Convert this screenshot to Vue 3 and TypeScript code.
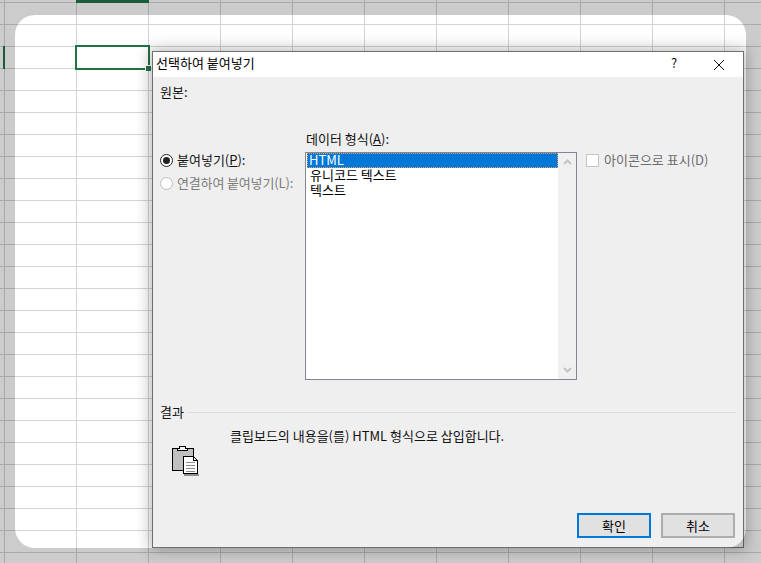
<script setup lang="ts">
const formats: string[] = ['HTML', '유니코드 텍스트', '텍스트']
</script>

<template>
  <div class="sheet">
    <div class="col-mark"></div>
    <div class="row-mark"></div>
    <div class="cell"><span class="handle"></span></div>

    <section class="dialog">
      <header class="titlebar">
        <span class="title">선택하여 붙여넣기</span>
        <span class="help">?</span>
        <svg class="close" width="12" height="12" viewBox="0 0 12 12">
          <path d="M1 1L11 11M11 1L1 11" stroke="#111" stroke-width="1" fill="none" />
        </svg>
      </header>

      <div class="body">
        <div class="source">원본:</div>

        <div class="main">
          <div class="options">
            <label class="radio-row">
              <span class="radio on"></span>
              <span>붙여넣기(<u>P</u>):</span>
            </label>
            <label class="radio-row off">
              <span class="radio"></span>
              <span class="tight">연결하여 붙여넣기(L):</span>
            </label>
          </div>

          <div class="format">
            <div class="format-label">데이터 형식(<u>A</u>):</div>
            <div class="listbox">
              <ul class="items">
                <li v-for="(f, i) in formats" :key="f" :class="{ selected: i === 0 }">{{ f }}</li>
              </ul>
              <div class="scrollbar">
                <svg width="9" height="6" viewBox="0 0 9 6">
                  <path d="M1 5L4.5 1.5L8 5" stroke="#c4c4c4" stroke-width="2" fill="none" />
                </svg>
                <svg width="9" height="6" viewBox="0 0 9 6">
                  <path d="M1 1L4.5 4.5L8 1" stroke="#c4c4c4" stroke-width="2" fill="none" />
                </svg>
              </div>
            </div>
          </div>

          <label class="check-row">
            <span class="check"></span>
            <span>아이콘으로 표시(D)</span>
          </label>
        </div>

        <div class="result-head">
          <span>결과</span>
          <span class="rule"></span>
        </div>

        <div class="result">
          <svg class="clip-icon" width="27" height="30" viewBox="0 0 27 30" shape-rendering="crispEdges">
            <rect x="0.500" y="2.500" width="21" height="22" fill="#c0c0c0" stroke="#000" />
            <path d="M5.500 4.500V2.500H7.500V0.500H13.500V2.500H15.500V4.500Z" fill="#f4f4f4" stroke="#000" />
            <rect x="12" y="28" width="15" height="2" fill="#8f8f8f" />
            <path d="M11.500 10.500H21.500L25.500 14.500V27.500H11.500Z" fill="#fff" stroke="#000" />
            <path d="M21.500 10.500V14.500H25.500" fill="none" stroke="#000" />
            <path d="M14 16.500H23M14 19.500H23M14 22.500H23M14 25.500H23" stroke="#8a8a8a" />
          </svg>
          <p class="desc">클립보드의 내용을(를) HTML 형식으로 삽입합니다.</p>
        </div>

        <div class="buttons">
          <button class="btn primary">확인</button>
          <button class="btn">취소</button>
        </div>
      </div>
    </section>

    <div class="frame"></div>
  </div>
</template>

<style>
html, body { margin: 0; padding: 0; }
</style>

<style scoped>
.sheet {
  position: relative;
  width: 761px;
  height: 563px;
  overflow: hidden;
  background-color: #fff;
  background-image:
    linear-gradient(to right, #d4d4d4 0 1px, transparent 1px),
    linear-gradient(to bottom, #d4d4d4 0 1px, transparent 1px);
  background-size: 72px 100%, 100% 22px;
  background-position: 4px 0, 0 2px;
  font-family: "Noto Sans CJK KR", "Noto Sans", sans-serif;
  font-size: 13px;
  line-height: 16px;
  color: #111;
}
.col-mark {
  position: absolute;
  left: 76px;
  top: 0;
  width: 73px;
  height: 3px;
  background: #217346;
}
.row-mark {
  position: absolute;
  left: 3px;
  top: 46px;
  width: 2px;
  height: 23px;
  background: #217346;
}
.cell {
  position: absolute;
  left: 75px;
  top: 45px;
  width: 71px;
  height: 21px;
  border: 2px solid #217346;
}
.handle {
  position: absolute;
  right: -3px;
  bottom: -3px;
  box-sizing: border-box;
  width: 6px;
  height: 6px;
  background: #217346;
  border: 1px solid #fff;
  border-right: 0;
  border-bottom: 0;
}
.dialog {
  position: absolute;
  left: 152px;
  top: 51px;
  width: 590px;
  height: 495px;
  border: 1px solid #6f6f6f;
  background: #efefef;
  box-shadow: 0 0 14px 2px rgba(0, 0, 0, 0.28);
  display: flex;
  flex-direction: column;
}
.titlebar {
  height: 25px;
  background: #fff;
  display: flex;
  align-items: center;
  padding-left: 3px;
  flex: none;
}
.title { flex: 1; color: #000; margin-top: -3px; }
.help { width: 10px; margin-right: 32px; color: #111; margin-top: -3px; }
.close { margin-right: 18px; }
.body {
  flex: 1;
  display: flex;
  flex-direction: column;
  padding: 7px 7px 9px 7px;
}
.source { height: 16px; }
.main {
  display: flex;
  margin-top: 31px;
  align-items: flex-start;
}
.options {
  width: 145px;
  padding-top: 21px;
  display: flex;
  flex-direction: column;
  gap: 7px;
}
.radio-row {
  display: flex;
  align-items: center;
  gap: 4px;
  height: 16px;
}
.radio-row.off { color: #7c7c7c; }
.tight { letter-spacing: -0.15px; white-space: nowrap; }
.radio {
  position: relative;
  width: 11px;
  height: 11px;
  border: 1px solid #bdbdbd;
  border-radius: 50%;
  background: #fff;
  flex: none;
}
.radio.on { border-color: #222; }
.radio.on::after {
  content: "";
  position: absolute;
  left: 2px;
  top: 2px;
  width: 7px;
  height: 7px;
  border-radius: 50%;
  background: #222;
}
.format { width: 272px; }
.format-label { height: 16px; margin-left: 1px; margin-bottom: 5px; }
.listbox {
  width: 270px;
  height: 226px;
  border: 1px solid #828790;
  display: flex;
  background: #fff;
}
.items {
  list-style: none;
  margin: 0 0 0 1px;
  padding: 0;
  width: 251px;
  color: #000;
}
.items li { height: 15px; line-height: 14px; padding-left: 3px; }
.items li.selected {
  height: 15px;
  padding-left: 2px;
  background: #0078d7;
  color: #fff;
  outline: 1px dotted #e8a060;
  outline-offset: -1px;
}
.scrollbar {
  flex: 1;
  background: #f0f0f0;
  display: flex;
  flex-direction: column;
  justify-content: space-between;
  align-items: center;
  padding: 6px 0 6px;
}
.check-row {
  display: flex;
  align-items: center;
  gap: 5px;
  margin-left: 9px;
  margin-top: 21px;
  height: 16px;
  color: #6d6d6d;
}
.check {
  width: 11px;
  height: 11px;
  border: 1px solid #c4c4c4;
  background: #fff;
  flex: none;
}
.result-head {
  display: flex;
  align-items: center;
  gap: 4px;
  margin-top: 24px;
  height: 16px;
}
.rule {
  flex: 1;
  height: 1px;
  background: #dcdcdc;
}
.result {
  display: flex;
  align-items: flex-start;
  margin-top: 8px;
  margin-left: 12px;
}
.clip-icon { margin-top: 18px; flex: none; }
.desc { margin: 0 0 0 31px; }
.buttons {
  margin-top: auto;
  display: flex;
  justify-content: flex-end;
  gap: 10px;
  margin-right: 1px;
}
.btn {
  width: 74px;
  height: 25px;
  padding: 0;
  border: 2px solid #adadad;
  background: #e1e1e1;
  font: inherit;
  color: #000;
}
.btn.primary { border-color: #0078d7; }
.frame {
  position: absolute;
  left: 15px;
  top: 15px;
  width: 731px;
  height: 533px;
  border-radius: 20px;
  box-shadow: 0 0 0 800px rgba(0, 0, 0, 0.2);
  pointer-events: none;
}
</style>
